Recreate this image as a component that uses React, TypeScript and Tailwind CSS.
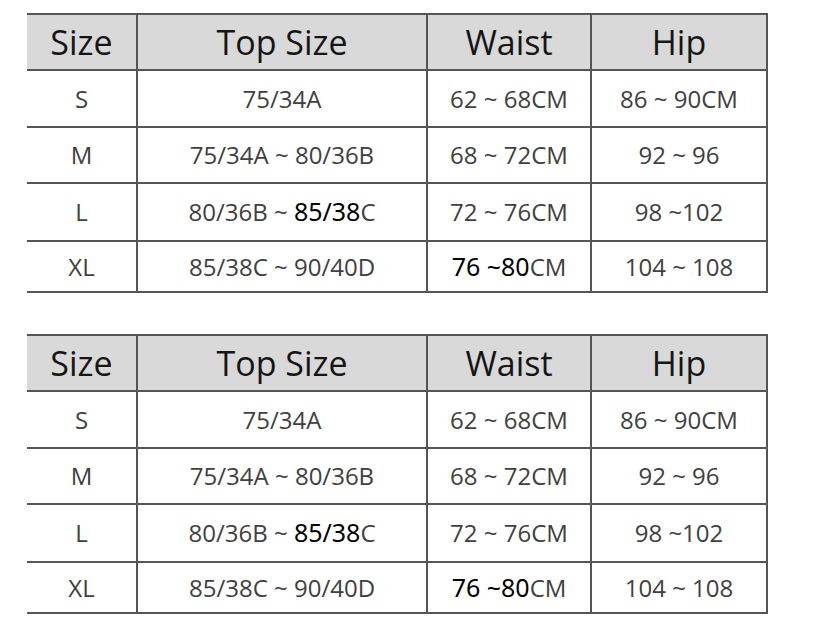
import type { ReactNode } from "react";

type Row = {
  size: string;
  top: ReactNode;
  waist: ReactNode;
  hip: string;
  h: string;
};

const dark = "font-['Noto_Sans',sans-serif] text-[25px] text-black";

const rows: Row[] = [
  { size: "S", top: "75/34A", waist: "62 ~ 68CM", hip: "86 ~ 90CM", h: "h-[57px]" },
  { size: "M", top: "75/34A ~ 80/36B", waist: "68 ~ 72CM", hip: "92 ~ 96", h: "h-[56px]" },
  {
    size: "L",
    top: (
      <>
        {"80/36B ~ "}
        <span className={dark}>85/38</span>C
      </>
    ),
    waist: "72 ~ 76CM",
    hip: "98 ~102",
    h: "h-[58px]"
  },
  {
    size: "XL",
    top: "85/38C ~ 90/40D",
    waist: (
      <>
        <span className={dark}>76 ~80</span>CM
      </>
    ),
    hip: "104 ~ 108",
    h: "h-[51px]"
  }
];

const cols = ["w-[109px]", "w-[290px]", "w-[164px]", "w-[178px]"];

function Cell({ i, children }: { i: number; children: ReactNode }) {
  return (
    <div
      className={`${cols[i]} flex items-center justify-center whitespace-pre ${
        i > 0 ? "border-l-2 border-[#555]" : ""
      } ${i === 3 ? "border-r-2 border-[#555]" : ""}`}
    >
      {children}
    </div>
  );
}

function SizeTable() {
  const headers = ["Size", "Top Size", "Waist", "Hip"];
  return (
    <div className="w-[741px] border-t-2 border-[#555]">
      <div className="flex h-[56px] border-b-2 border-[#555] bg-[#d9d9d9] text-[34px] text-[#151515]">
        {headers.map((label, i) => (
          <Cell key={label} i={i}>
            <span className="leading-none">{label}</span>
          </Cell>
        ))}
      </div>
      {rows.map((row) => (
        <div key={row.size} className={`flex ${row.h} border-b-2 border-[#555] text-[24px] text-[#404040]`}>
          <Cell i={0}>{row.size}</Cell>
          <Cell i={1}>{row.top}</Cell>
          <Cell i={2}>{row.waist}</Cell>
          <Cell i={3}>{row.hip}</Cell>
        </div>
      ))}
    </div>
  );
}

export default function App() {
  return (
    <div className="min-h-[634px] w-[836px] bg-white pl-[27px] pt-[13px] font-['Open_Sans',sans-serif]">
      <div className="flex flex-col gap-[41px]">
        <SizeTable />
        <SizeTable />
      </div>
    </div>
  );
}
